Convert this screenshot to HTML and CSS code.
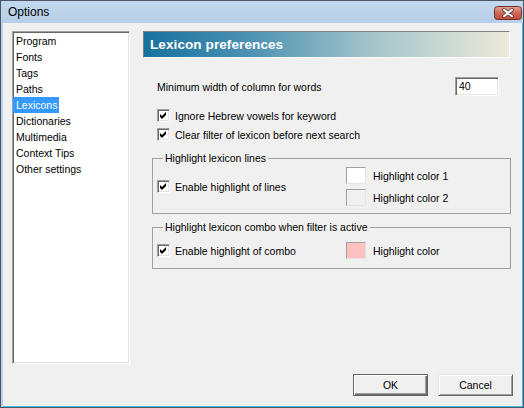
FILE: index.html
```html
<!DOCTYPE html>
<html>
<head>
<meta charset="utf-8">
<link rel="stylesheet" href="styles.css">
</head>
<body>
<div class="window">
  <div class="titlebar">
    <span class="title">Options</span>
    <span class="close">
      <svg width="28" height="14" viewBox="0 0 28 14">
        <defs>
          <linearGradient id="cg" x1="0" y1="0" x2="0" y2="1">
            <stop offset="0" stop-color="#e3a597"/>
            <stop offset="0.5" stop-color="#cf6a58"/>
            <stop offset="1" stop-color="#c2483a"/>
          </linearGradient>
        </defs>
        <rect x="0.5" y="0.5" width="27" height="13" rx="3" fill="url(#cg)" stroke="#6f3027"/>
        <path d="M10 3.8 L18 10.2 M18 3.8 L10 10.2" stroke="#6a3a36" stroke-width="3.6" stroke-linecap="round"/>
        <path d="M10 3.8 L18 10.2 M18 3.8 L10 10.2" stroke="#ffffff" stroke-width="2" stroke-linecap="round"/>
      </svg>
    </span>
  </div>
  <div class="client">
    <div class="main">
      <ul class="listbox">
        <li>Program</li>
        <li>Fonts</li>
        <li>Tags</li>
        <li>Paths</li>
        <li><span class="sel">Lexicons</span></li>
        <li>Dictionaries</li>
        <li>Multimedia</li>
        <li>Context Tips</li>
        <li>Other settings</li>
      </ul>
      <div class="panel">
        <div class="banner">Lexicon preferences</div>
        <div class="row-min">
          <span>Minimum width of column for words</span>
          <span class="edit">40</span>
        </div>
        <div class="check-row first">
          <span class="cb"><svg width="11" height="11" viewBox="0 0 11 11"><path d="M2 4 l2 2 l4 -4 v3 l-4 4 l-2 -2 z" fill="#000"/></svg></span>
          <span>Ignore Hebrew vowels for keyword</span>
        </div>
        <div class="check-row">
          <span class="cb"><svg width="11" height="11" viewBox="0 0 11 11"><path d="M2 4 l2 2 l4 -4 v3 l-4 4 l-2 -2 z" fill="#000"/></svg></span>
          <span>Clear filter of lexicon before next search</span>
        </div>
        <fieldset class="group g1">
          <legend>Highlight lexicon lines</legend>
          <div class="group-body">
            <div class="check-row in-group">
              <span class="cb"><svg width="11" height="11" viewBox="0 0 11 11"><path d="M2 4 l2 2 l4 -4 v3 l-4 4 l-2 -2 z" fill="#000"/></svg></span>
              <span>Enable highlight of lines</span>
            </div>
            <div class="colors">
              <div class="color-row"><span class="swatch sw-white"></span><span>Highlight color 1</span></div>
              <div class="color-row"><span class="swatch sw-grey"></span><span>Highlight color 2</span></div>
            </div>
          </div>
        </fieldset>
        <fieldset class="group g2">
          <legend>Highlight lexicon combo when filter is active</legend>
          <div class="group-body">
            <div class="check-row in-group">
              <span class="cb"><svg width="11" height="11" viewBox="0 0 11 11"><path d="M2 4 l2 2 l4 -4 v3 l-4 4 l-2 -2 z" fill="#000"/></svg></span>
              <span>Enable highlight of combo</span>
            </div>
            <div class="colors">
              <div class="color-row"><span class="swatch sw-pink"></span><span>Highlight color</span></div>
            </div>
          </div>
        </fieldset>
      </div>
    </div>
    <div class="buttons">
      <button class="btn default">OK</button>
      <button class="btn">Cancel</button>
    </div>
  </div>
</div>
</body>
</html>
```

FILE: styles.css
```css
* { box-sizing: border-box; }
html, body { margin: 0; padding: 0; }
body {
  width: 524px;
  height: 408px;
  overflow: hidden;
  font-family: "Liberation Sans", Arial, sans-serif;
  font-size: 10.5px;
  color: #000;
  background: #f0f0f0;
}
.window {
  width: 524px;
  height: 408px;
  border: 1px solid #4a5664;
  background: #b9d1ea;
  display: flex;
  flex-direction: column;
}
.titlebar {
  height: 22px;
  flex: none;
  display: flex;
  align-items: center;
  justify-content: space-between;
  padding: 0 1px 0 7px;
  background: linear-gradient(#c3d8ef, #b5cde8);
}
.title {
  font-size: 12px;
  line-height: 14px;
}
.close {
  display: flex;
  width: 28px;
  height: 14px;
  margin-top: 1px;
}
.client {
  flex: 1;
  margin-left: 2px;
  border-right: 1px solid #46bfe8;
  border-bottom: 1px solid #46bfe8;
  background: #f0f0f0;
  padding: 8px 9px 0 9px;
  display: flex;
  flex-direction: column;
}
.main {
  display: flex;
  height: 333px;
}
.listbox {
  list-style: none;
  margin: 0;
  padding: 1px 0 0 0;
  width: 118px;
  height: 333px;
  background: #fff;
  border: 1px solid;
  border-color: #a0a0a0 #fff #fff #a0a0a0;
  box-shadow: inset 1px 1px #696969, inset -1px -1px #e3e3e3;
}
.listbox li {
  height: 16px;
  line-height: 16px;
  padding-left: 3px;
  white-space: nowrap;
}
.listbox li:has(.sel) { padding-left: 0; }
.sel {
  display: inline-block;
  background: #3399ff;
  color: #fff;
  padding: 0 2px 0 3px;
  height: 16px;
}
.panel {
  margin-left: 13px;
  width: 368px;
  display: flex;
  flex-direction: column;
}
.banner {
  width: 367px;
  height: 27px;
  border: 1px solid;
  border-color: #808080 #fff #fff #808080;
  background: linear-gradient(to right, #17719e 0%, #4f93b3 30%, #a3c4cb 62%, #ece9da 100%);
  color: #fff;
  font-weight: bold;
  font-size: 13.5px;
  letter-spacing: 0.1px;
  line-height: 25px;
  padding-left: 6px;
}
.row-min {
  margin-top: 19px;
  height: 19px;
  display: flex;
  align-items: center;
  justify-content: space-between;
  padding: 0 12px 0 14px;
}
.edit {
  width: 44px;
  height: 19px;
  background: #fff;
  border: 1px solid;
  border-color: #a0a0a0 #fff #fff #a0a0a0;
  box-shadow: inset 1px 1px #696969, inset -1px -1px #e3e3e3;
  line-height: 17px;
  padding-left: 3px;
}
.check-row {
  height: 19px;
  display: flex;
  align-items: center;
  padding-left: 14px;
  white-space: nowrap;
}
.check-row.first { margin-top: 10px; }
.cb {
  width: 13px;
  height: 13px;
  flex: none;
  background: #fff;
  border: 1px solid;
  border-color: #a0a0a0 #fff #fff #a0a0a0;
  box-shadow: inset 1px 1px #696969, inset -1px -1px #e3e3e3;
  margin-right: 5px;
  display: flex;
}
.cb svg { display: block; }
.group {
  margin: 8px 0 0 9px;
  border: 1px solid #a0a0a0;
  padding: 2px 0 7px 4px;
  min-width: 0;
}
.group legend {
  padding: 0 2px;
  margin-left: 6px;
  line-height: 13px;
}
.g2 {
  margin-top: 7px;
  padding: 7px 0 8px 4px;
}
.group-body {
  display: flex;
  align-items: center;
}
.check-row.in-group {
  padding-left: 0;
  width: 189px;
  flex: none;
}
.colors {
  display: flex;
  flex-direction: column;
  gap: 5px;
}
.color-row {
  display: flex;
  align-items: center;
  height: 17px;
}
.swatch {
  width: 20px;
  height: 17px;
  margin-right: 7px;
  border: 1px solid;
  border-color: #a0a0a0 #e3e3e3 #e3e3e3 #a0a0a0;
}
.sw-white { background: #fff; }
.sw-grey { background: #f0f0f0; }
.sw-pink { background: #ffc0c0; }
.buttons {
  margin-top: 10px;
  display: flex;
  justify-content: flex-end;
  gap: 10px;
}
.btn {
  width: 75px;
  height: 22px;
  font-family: inherit;
  font-size: 10.5px;
  color: #000;
  background: #f0f0f0;
  border: 1px solid;
  border-color: #e3e3e3 #696969 #696969 #e3e3e3;
  box-shadow: inset 1px 1px #fff, inset -1px -1px #a0a0a0;
  padding: 0;
  border-radius: 0;
}
.btn.default {
  border-color: #646464;
  box-shadow: inset 1px 1px #fff, inset -1px -1px #696969, inset -2px -2px #a0a0a0;
}
```
